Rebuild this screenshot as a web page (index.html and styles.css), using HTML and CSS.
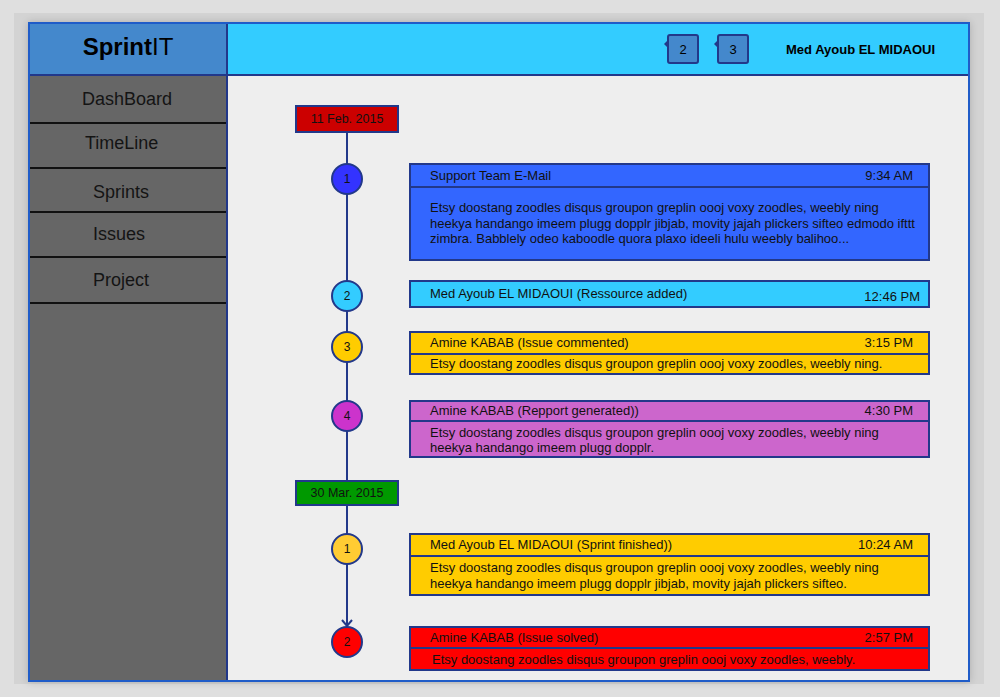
FILE: index.html
```html
<!DOCTYPE html>
<html>
<head>
<meta charset="utf-8">
<title>SprintIT - TimeLine</title>
<link rel="stylesheet" href="styles.css">
</head>
<body>
<div class="stage">
  <div class="frame">
    <header class="topbar">
      <div class="brand"><b>Sprint</b>IT</div>
      <div class="topbar-main">
        <div class="badge">2</div>
        <div class="badge">3</div>
        <div class="user">Med Ayoub EL MIDAOUI</div>
      </div>
    </header>
    <div class="main">
      <nav class="sidebar">
        <div class="nav-item nav-1">DashBoard</div>
        <div class="nav-item nav-2">TimeLine</div>
        <div class="nav-item nav-3">Sprints</div>
        <div class="nav-item nav-4">Issues</div>
        <div class="nav-item nav-5">Project</div>
      </nav>
      <section class="content">
        <div class="timeline">
          <div class="tl-line"></div>
          <svg class="tl-arrow" width="12" height="10" viewBox="0 0 12 10"><polyline points="1,2 6,8 11,2" fill="none" stroke="#22388a" stroke-width="2"/></svg>

          <div class="tl-row">
            <div class="tl-node"><div class="date date-red">11 Feb. 2015</div></div>
          </div>

          <div class="tl-row ev1">
            <div class="tl-node"><div class="dot dot-blue">1</div></div>
            <div class="card card-blue">
              <div class="card-head h21"><span>Support Team E-Mail</span><span>9:34 AM</span></div>
              <div class="card-body body-1">Etsy doostang zoodles disqus groupon greplin oooj voxy zoodles, weebly ning<br>heekya handango imeem plugg dopplr jibjab, movity jajah plickers sifteo edmodo ifttt<br>zimbra. Babblely odeo kaboodle quora plaxo ideeli hulu weebly balihoo...</div>
            </div>
          </div>

          <div class="tl-row ev2">
            <div class="tl-node"><div class="dot dot-cyan">2</div></div>
            <div class="card card-cyan">
              <div class="card-head h24 no-div"><span>Med Ayoub EL MIDAOUI (Ressource added)</span><span class="time-low">12:46 PM</span></div>
            </div>
          </div>

          <div class="tl-row ev3">
            <div class="tl-node"><div class="dot dot-yellow">3</div></div>
            <div class="card card-yellow">
              <div class="card-head h20"><span>Amine KABAB (Issue commented)</span><span>3:15 PM</span></div>
              <div class="card-body body-3">Etsy doostang zoodles disqus groupon greplin oooj voxy zoodles, weebly ning.</div>
            </div>
          </div>

          <div class="tl-row ev4">
            <div class="tl-node"><div class="dot dot-magenta">4</div></div>
            <div class="card card-purple">
              <div class="card-head h18"><span>Amine KABAB (Repport generated))</span><span>4:30 PM</span></div>
              <div class="card-body body-4">Etsy doostang zoodles disqus groupon greplin oooj voxy zoodles, weebly ning<br>heekya handango imeem plugg dopplr.</div>
            </div>
          </div>

          <div class="tl-row date2">
            <div class="tl-node"><div class="date date-green">30 Mar. 2015</div></div>
          </div>

          <div class="tl-row ev5">
            <div class="tl-node"><div class="dot dot-gold">1</div></div>
            <div class="card card-yellow">
              <div class="card-head h20"><span>Med Ayoub EL MIDAOUI (Sprint finished))</span><span>10:24 AM</span></div>
              <div class="card-body body-5">Etsy doostang zoodles disqus groupon greplin oooj voxy zoodles, weebly ning<br>heekya handango imeem plugg dopplr jibjab, movity jajah plickers sifteo.</div>
            </div>
          </div>

          <div class="tl-row ev6">
            <div class="tl-node"><div class="dot dot-red">2</div></div>
            <div class="card card-red">
              <div class="card-head h19"><span>Amine KABAB (Issue solved)</span><span>2:57 PM</span></div>
              <div class="card-body body-6">Etsy doostang zoodles disqus groupon greplin oooj voxy zoodles, weebly.</div>
            </div>
          </div>
        </div>
      </section>
    </div>
  </div>
</div>
</body>
</html>
```
FILE: styles.css
```css
html, body {
  margin: 0;
  padding: 0;
}
body {
  background: #dfdfdf;
  font-family: "Liberation Sans", Arial, sans-serif;
  color: #111;
  width: 1000px;
  height: 697px;
  overflow: hidden;
}
.stage {
  margin: 13px 0 0 14px;
  width: 970px;
  height: 671px;
  box-sizing: border-box;
  padding: 9px 14px 2px 14px;
  background: #d3d3d3;
}
.frame {
  width: 942px;
  height: 660px;
  box-sizing: border-box;
  border: 2px solid #1f5cc8;
  display: flex;
  flex-direction: column;
  box-shadow: 0 0 8px rgba(0, 0, 0, 0.18);
  background: #eeeeee;
}

/* top bar */
.topbar {
  display: flex;
  height: 52px;
  flex: none;
  border-bottom: 2px solid #22388a;
  box-sizing: border-box;
}
.brand {
  width: 198px;
  box-sizing: border-box;
  border-right: 2px solid #22388a;
  background: #4488cc;
  text-align: center;
  font-size: 24px;
  line-height: 45px;
  color: #000;
}
.brand b {
  font-weight: bold;
}
.topbar-main {
  flex: 1;
  background: #33ccff;
  display: flex;
  align-items: center;
  padding-left: 439px;
}
.badge {
  position: relative;
  width: 32px;
  height: 30px;
  box-sizing: border-box;
  border: 2px solid #22388a;
  border-radius: 3px;
  background: #4488cc;
  text-align: center;
  line-height: 27px;
  font-size: 13px;
  color: #000;
  margin-right: 18px;
}
.badge::before {
  content: "";
  position: absolute;
  left: -5px;
  top: 5px;
  border-right: 3px solid #22388a;
  border-top: 3px solid transparent;
  border-bottom: 3px solid transparent;
}
.badge + .badge {
  margin-right: 37px;
}
.user {
  font-weight: bold;
  font-size: 13px;
  color: #000;
}

/* main */
.main {
  flex: 1;
  display: flex;
  min-height: 0;
}
.sidebar {
  width: 198px;
  flex: none;
  box-sizing: border-box;
  border-right: 2px solid #22388a;
  background: #666666;
}
.nav-item {
  font-size: 18px;
  color: #141414;
  border-bottom: 2px solid #111;
  box-sizing: content-box;
}
.nav-1 { height: 46px; line-height: 46px; text-align: center; padding-right: 2px; }
.nav-2 { height: 43px; line-height: 39px; padding-left: 55px; }
.nav-3 { height: 38px; line-height: 38px; padding-top: 4px; padding-left: 63px; }
.nav-4 { height: 43px; line-height: 43px; padding-left: 63px; }
.nav-5 { height: 44px; line-height: 44px; padding-left: 63px; }

.content {
  flex: 1;
  background: #eeeeee;
}

/* timeline */
.timeline {
  position: relative;
  z-index: 0;
  padding: 29px 0 0 67px;
}
.tl-line {
  position: absolute;
  z-index: -1;
  left: 118px;
  top: 57px;
  width: 2px;
  height: 493px;
  background: #22388a;
}
.tl-arrow {
  position: absolute;
  left: 113px;
  top: 542px;
}
.tl-row {
  display: flex;
  align-items: flex-start;
}
.ev1 { margin-top: 30px; }
.ev2 { margin-top: 19px; }
.ev3 { margin-top: 19px; }
.ev4 { margin-top: 25px; }
.date2 { margin-top: 22px; }
.ev5 { margin-top: 27px; }
.ev6 { margin-top: 30px; }

.tl-node {
  width: 104px;
  flex: none;
  display: flex;
  justify-content: center;
}
.date {
  width: 104px;
  box-sizing: border-box;
  border: 2px solid #22388a;
  text-align: center;
  font-size: 12.5px;
  color: #111;
}
.date-red { background: #cc0000; height: 28px; line-height: 24px; }
.date-green { background: #009900; height: 26px; line-height: 22px; }

.dot {
  width: 32px;
  height: 32px;
  box-sizing: border-box;
  border: 2px solid #22388a;
  border-radius: 50%;
  text-align: center;
  line-height: 28px;
  font-size: 12px;
  color: #111;
}
.dot-blue { background: #3333ff; }
.dot-cyan { background: #33ccff; }
.dot-yellow { background: #ffcc00; }
.dot-magenta { background: #cc33cc; }
.dot-gold { background: #ffcc33; }
.dot-red { background: #ff0000; }

.card {
  width: 521px;
  margin-left: 10px;
  box-sizing: border-box;
  border: 2px solid #22388a;
  font-size: 13px;
  color: #111;
}
.card-blue { background: #3366ff; }
.card-cyan { background: #33ccff; }
.card-yellow { background: #ffcc00; }
.card-purple { background: #cc66cc; }
.card-red { background: #ff0000; }

.card-head {
  display: flex;
  justify-content: space-between;
  padding: 0 15px 0 19px;
  border-bottom: 2px solid #22388a;
  white-space: nowrap;
}
.card-head.no-div { border-bottom: none; }
.h18 { height: 18px; line-height: 18px; }
.h19 { height: 19px; line-height: 19px; }
.h20 { height: 20px; line-height: 19px; }
.h21 { height: 21px; line-height: 21px; }
.h24 { height: 24px; line-height: 24px; }
.time-low {
  margin-top: 3px;
  margin-right: -7px;
}

.card-body {
  padding: 2px 15px 2px 19px;
  white-space: nowrap;
  line-height: 15.5px;
}
.body-1 { padding-top: 12px; padding-bottom: 12.5px; }
.body-3 { padding-top: 1px; padding-bottom: 1px; line-height: 16px; }
.body-4 { padding-top: 2.5px; padding-bottom: 0.5px; }
.body-5 { padding-top: 3px; padding-bottom: 3px; line-height: 15.7px; }
.body-6 { padding-top: 3px; padding-bottom: 1px; line-height: 16px; padding-left: 21px; }
```
